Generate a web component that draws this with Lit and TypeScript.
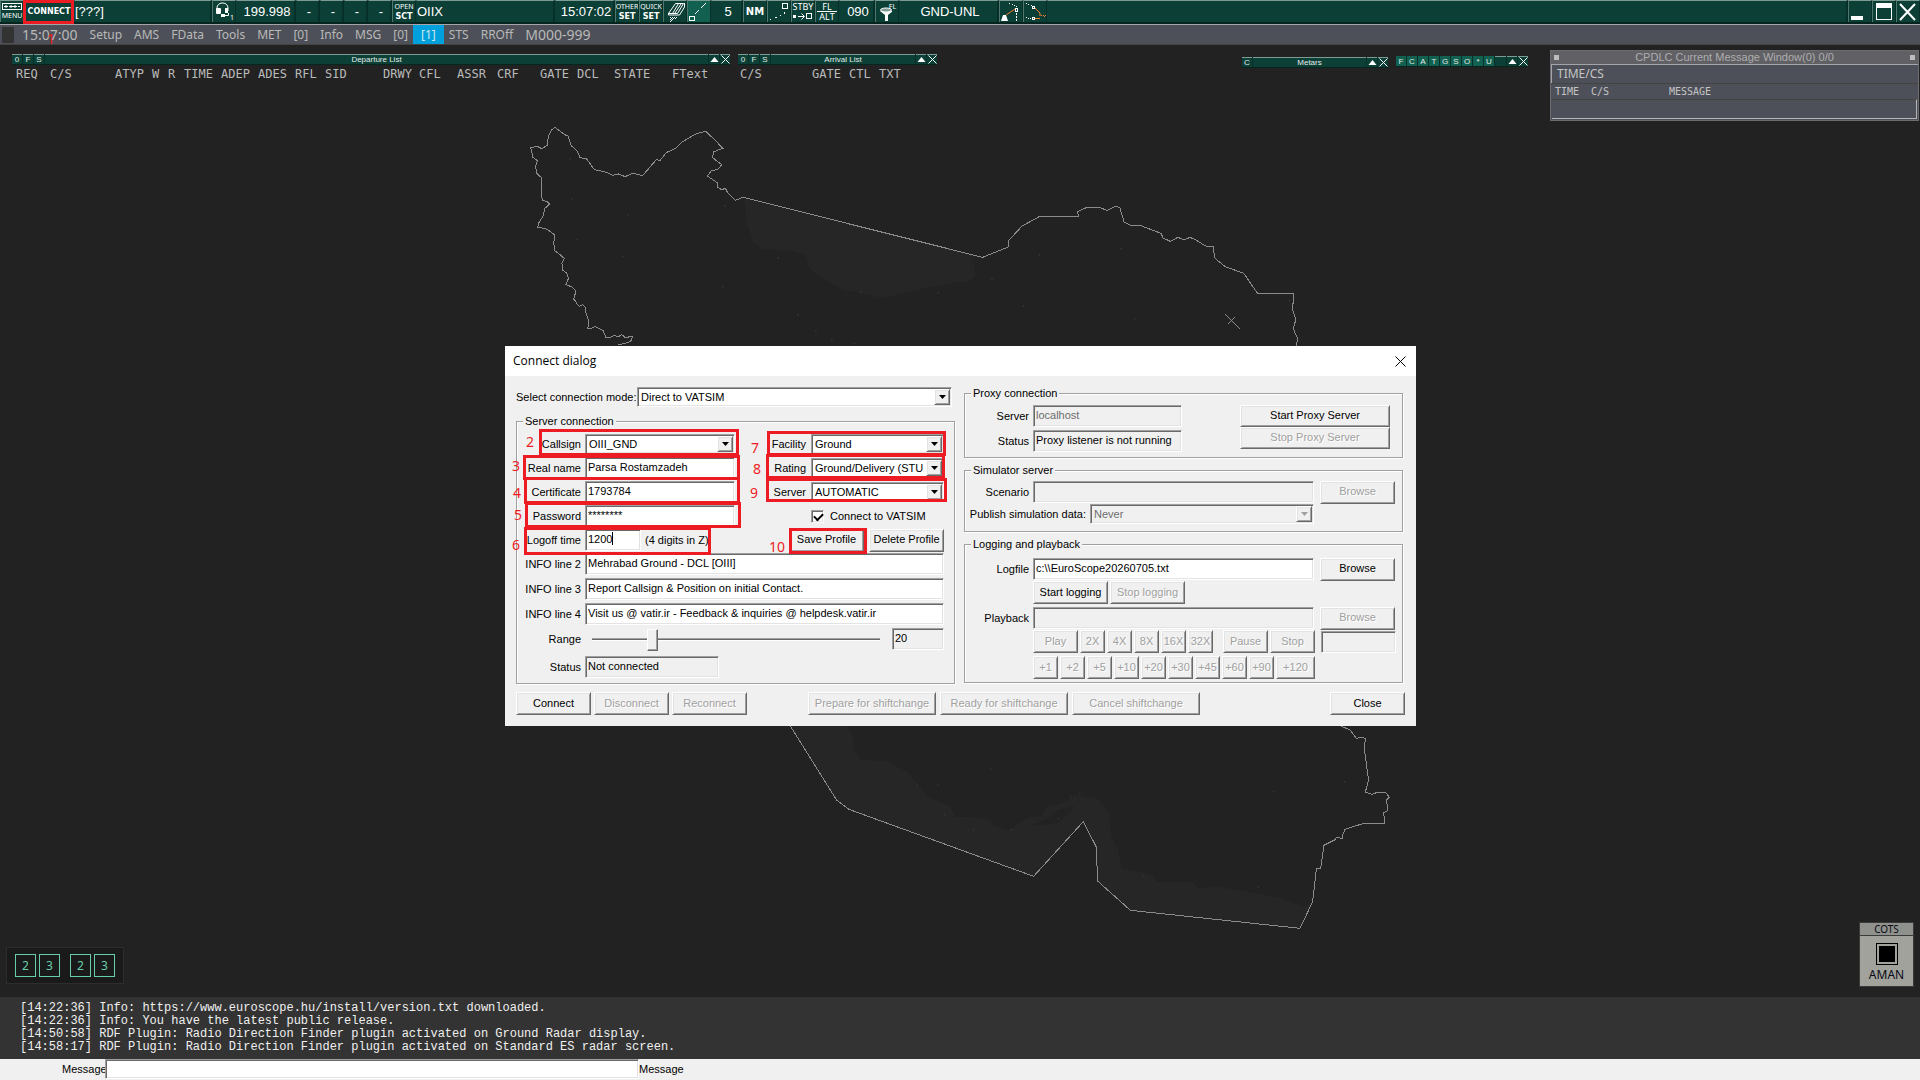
import { LitElement, html, svg, css, nothing } from "lit";
import { customElement } from "lit/decorators.js";
import { classMap } from "lit/directives/class-map.js";

/* ---------- toolbar icons, drawn on a 22 x 22 pixel grid ---------- */
const icon = (body: unknown, w = 22, h = 22) =>
  html`<svg class="icon" width=${w} height=${h} viewBox="0 0 ${w} ${h}" aria-hidden="true">${body}</svg>`;

const dots = (points: number[][], fill = "#fff") =>
  points.map(([x, y]) => svg`<rect x=${x} y=${y} width="1" height="1" fill=${fill}></rect>`);

const menuIcon = icon(svg`
  <rect x="1.5" y=".5" width="19" height="6" fill="none" stroke="#fff"></rect>
  <path d="M3 3.500h4M5 2v3M8 3.500h4M10 2v3M12 3.500h4M17 3.500h2M14 2v3" stroke="#fff"></path>`, 22, 8);

const headsetIcon = icon(svg`
  <path d="M3 10V7a5 5 0 0 1 5-5h1a5 5 0 0 1 5 5v3" fill="none" stroke="#fff"></path>
  <rect x="2" y="7" width="5" height="6" rx="1" fill="#fff"></rect>
  <rect x="11" y="7" width="3" height="5" fill="#fff"></rect>
  <path d="M14.500 12v2.500H11" fill="none" stroke="#fff"></path><rect x="7" y="13" width="4" height="3" fill="#fff"></rect>`, 16, 22);

const stripIcon = icon(svg`
  <path d="M11.500 2.500h8l-6 10h-9z M14.500 2.500l-6 10 M17 3l-6 9" fill="none" stroke="#fff"></path>
  <path d="M20.500 2v4l-5 8h-11v-2" fill="none" stroke="#fff"></path>
  ${dots([[6, 16], [8, 16], [10, 16], [12, 16], [7, 17], [9, 17], [11, 17], [6, 18], [8, 18], [7, 19], [6, 20]])}`);

const vectorIcon = icon(svg`
  <rect x="1.500" y="15.500" width="5" height="4" fill="none" stroke="#fff"></rect>
  <path d="M7 13l4-4M13 7l5-5" stroke="#fff"></path>`);

const trailIcon = icon(svg`
  <rect x="14.500" y="2.500" width="5" height="5" fill="none" stroke="#fff"></rect>
  ${dots([[16, 11], [16, 12], [12, 14], [8, 16], [7, 16], [2, 18]])}`);

const standbyIcon = icon(svg`
  <rect x="1" y="4" width="3" height="3" fill="#fff"></rect>
  <path d="M6 5.500h6M9.500 2.500l3 3-3 3" fill="none" stroke="#fff"></path>
  <rect x="14.500" y="2.500" width="5" height="5" fill="none" stroke="#fff"></rect>`, 22, 10);

const funnelIcon = icon(svg`
  <path d="M2 10l5 4v6h3v-6l5-4z" fill="#fff"></path>
  <ellipse cx="8" cy="9" rx="5.500" ry="2" fill="#7e9b93" stroke="#fff"></ellipse>`, 14, 22);

const trackIcon = icon(svg`
  <path d="M3 14h3l2 6H1z" fill="#fff"></path>
  <path d="M6 14l9-6" stroke="#f47b30"></path>
  <rect x="15.500" y="7.500" width="2" height="3" fill="none" stroke="#fff"></rect>
  <path d="M16.500 12v2M16.500 15v2M16.500 18v2" stroke="#fff"></path>
  ${dots([[9, 2], [12, 3], [14, 4], [16, 5]])}`);

const arcIcon = icon(svg`
  <path d="M11 7l5 5v3M11 17.500h5" fill="none" stroke="#f47b30"></path>
  ${dots([[17, 14], [19, 14], [20, 15], [21, 14]], "#f47b30")}
  <rect x="8.500" y="5.500" width="2" height="2" fill="none" stroke="#fff"></rect>
  <rect x="8.500" y="16.500" width="2" height="2" fill="none" stroke="#fff"></rect>
  ${dots([[2, 2], [4, 3], [7, 4], [2, 16], [4, 17], [6, 17]])}`);

const minimizeIcon = icon(svg`<rect x="2" y="15" width="12" height="4" fill="#fff"></rect>`);
const maximizeIcon = icon(svg`<rect x="3.500" y="3.500" width="15" height="15" fill="none" stroke="#fff"></rect><rect x="3" y="2" width="16" height="5" fill="#fff"></rect>`);
const closeIcon = icon(svg`<path d="M3 3l15 16M18 3L3 19" stroke="#fff" stroke-width="2"></path>`);

const upGlyph = html`<svg width="9" height="7" viewBox="0 0 9 7" aria-hidden="true"><path d="M4.500 1L8.500 6h-8z" fill="#fff"></path></svg>`;
const crossGlyph = html`<svg width="9" height="9" viewBox="0 0 9 9" aria-hidden="true"><path d="M.5.5l8 8M8.500.5l-8 8" stroke="#fff"></path></svg>`;

/* ---------- sector map ---------- */
const northBorder =
  "216,735 238,725 242,710 228,712 222,704 216,710 208,706 202,712 193,712 188,692 180,685 173,680 168,684 160,686 162,665 157,640 155,620 150,614 145,619 140,612 138,602 134,598 137,582 137,570 130,560 120,554 125,535 122,520 114,510 113,490 117,475 108,462 100,452 98,430 100,405 86,388 76,384 69,382 70,370 78,350 82,325 90,312 86,304 77,302 75,260 75,232 67,220 65,200 68,182 60,172 56,143 68,139 76,146 86,136 88,110 94,90 100,82 108,92 118,104 124,108 130,137 140,152 146,173 158,177 172,209 192,216 206,226 216,222 228,230 242,220 260,227 285,179 292,181 303,158 320,145 332,126 358,101 375,94 392,120 406,145 390,155 387,172 404,194 398,207 385,213 378,228 396,248 397,262 404,269 411,265 415,278 429,301 443,292 880,472 928,440 927,422 952,378 983,350 1055,350 1053,335 1070,322 1092,322 1107,331 1122,319 1130,323 1138,367 1150,376 1168,377 1205,400 1209,414 1222,424 1236,412 1247,420 1258,412 1270,421 1286,438 1300,440 1303,474 1322,500 1356,520 1381,580 1447,580 1445,630 1451,660 1446,685 1454,715 1452,740";
const northSea =
  "445,296 450,370 462,430 480,447 536,455 556,465 564,505 600,547 625,570 660,580 695,595 760,570 800,557 830,547 855,545 867,530 866,505 860,470 880,472";
const southBorder =
  "72,18 182,240 211,268 650,469 768,305 799,381 802,483 880,571 1283,625 1313,545 1322,445 1332,445 1340,376 1365,360 1370,352 1384,356 1384,345 1390,328 1432,311 1484,310 1482,278 1491,272 1489,240 1495,232 1488,219 1468,216 1455,223 1438,217 1446,180 1436,90 1438,55 1430,52 1417,55 1402,30 1380,18";
const southSea =
  "72,18 208,18 222,50 222,85 240,120 300,122 350,155 372,190 400,230 450,258 465,290 510,292 545,300 555,318 590,330 640,290 670,290 680,262 720,248 750,225 800,235 830,280 835,350 850,385 860,445 930,462 945,485 1030,485 1040,503 1090,500 1160,515 1240,535 1290,560 1313,545 1283,625 880,571 802,483 799,381 768,305 650,469 211,268 182,240";
const northDots = [[127, 175], [130, 295], [232, 343], [138, 418], [223, 469], [365, 109], [409, 316], [506, 472], [405, 559], [542, 643], [575, 691], [604, 718], [645, 730], [657, 577], [798, 577], [896, 535], [953, 616], [982, 463], [1131, 445], [1156, 655], [1438, 601]];
const southDots = [[547, 145], [374, 191], [422, 193], [438, 283], [506, 328], [595, 328], [738, 229], [759, 220], [709, 294], [616, 433], [564, 425], [911, 469], [1183, 500], [1219, 214], [1388, 184]];

const sectorMap = html`
  <svg class="map" viewBox="0 45 1920 952" preserveAspectRatio="xMidYMid slice" role="img" aria-label="Sector map">
    <g transform="translate(500 100) scale(.5485 .3333)">
      <polygon class="sea" points=${northSea}></polygon>
      <polyline class="border" points=${northBorder}></polyline>
      <path class="border" d="M1322 642L1348 686M1340 652L1327 672"></path>
      ${northDots.map(([x, y]) => svg`<rect class="spot" x=${x} y=${y} width="2" height="3"></rect>`)}
    </g>
    <g transform="translate(760 720) scale(.4209 .3333)">
      <polygon class="sea" points=${southSea}></polygon>
      <path class="land" d="M643 318l45-26 18-22 42-12-14 24-26 26-40 8z"></path>
      <polyline class="border" points=${southBorder}></polyline>
      ${southDots.map(([x, y]) => svg`<rect class="spot" x=${x} y=${y} width="2" height="3"></rect>`)}
    </g>
  </svg>`;

/* ---------- data ---------- */
const departureColumns: [string, number][] = [
  ["REQ", 34], ["C/S", 65], ["ATYP", 37], ["W", 16], ["R", 16], ["TIME", 37], ["ADEP", 37], ["ADES", 37],
  ["RFL", 30], ["SID", 58], ["DRWY", 36], ["CFL", 38], ["ASSR", 40], ["CRF", 43], ["GATE", 37], ["DCL", 37],
  ["STATE", 58], ["FText", 50],
];
const arrivalColumns: [string, number][] = [["C/S", 72], ["GATE", 37], ["CTL", 30], ["TXT", 40]];

const logLines = [
  "[14:22:36] Info: https://www.euroscope.hu/install/version.txt downloaded.",
  "[14:22:36] Info: You have the latest public release.",
  "[14:50:58] RDF Plugin: Radio Direction Finder plugin activated on Ground Radar display.",
  "[14:58:17] RDF Plugin: Radio Direction Finder plugin activated on Standard ES radar screen.",
];

/* Step markers, in dialog coordinates: box [x, y, w, h] and number [x, y]. */
const steps = [
  { n: 2, box: [34, 83, 200, 27], at: [21, 87] },
  { n: 3, box: [18, 109, 217, 25], at: [7, 111] },
  { n: 4, box: [19, 131, 216, 27], at: [8, 138] },
  { n: 5, box: [20, 156, 216, 26], at: [9, 160] },
  { n: 6, box: [19, 181, 187, 28], at: [7, 190] },
  { n: 7, box: [262, 85, 179, 25], at: [246, 93] },
  { n: 8, box: [261, 108, 179, 25], at: [248, 114] },
  { n: 9, box: [261, 132, 181, 24], at: [245, 138] },
  { n: 10, box: [284, 182, 78, 26], at: [264, 192] },
];

@customElement("app-root")
export class AppRoot extends LitElement {
  static styles = css`
    :host {
      display: flex; flex-direction: column; min-height: 100vh; overflow: hidden;
      background: #222; color: #fff; font: 11px/13px "Liberation Sans", sans-serif;
    }
    * { box-sizing: border-box; }
    button, input, select { font: inherit; color: inherit; margin: 0; border-radius: 0; outline: none; }
    svg { display: block; flex: none; }

    /* toolbar */
    .toolbar { display: flex; height: 24px; background: #0c4037; border-bottom: 2px solid #07251f; }
    .cell {
      display: flex; align-items: center; justify-content: center; flex: none; width: 24px; height: 22px; padding: 0;
      border: 0; border-top: 1px solid #7e9b93; border-left: 1px solid #4f776d; border-right: 1px solid #08302a;
      background: #0c4037; color: #fff; white-space: nowrap; overflow: hidden;
    }
    .cell.stack { flex-direction: column; }
    .cell.lit { background: #12604f; }
    .cell.field { padding-left: 3px; border-left-color: #0c4037; border-right: 2px solid #08302a; font-size: 13px; line-height: 20px; }
    .cell.left { justify-content: flex-start; padding-left: 0; }
    .cell.grow { flex: 1; }
    .w50 { width: 50px; } .w138 { width: 138px; } .w60 { width: 60px; } .w32 { width: 32px; }
    .w36 { width: 36px; } .w100 { width: 100px; } .w139 { width: 139px; }
    .tiny { font: 7px/9px "Noto Sans", sans-serif; }
    .small { font: 9px/9px "Noto Sans", sans-serif; }
    .tag { font: bold 8px/11px "DejaVu Sans", sans-serif; }
    .unit { font: bold 10px/12px "DejaVu Sans", sans-serif; }
    .rule { border-bottom: 1px solid #fff; padding: 0 5px; }
    .low { align-self: flex-end; }
    .high { align-self: flex-start; margin: 1px 0 0 -3px; }

    /* menu bar */
    .menubar {
      display: flex; align-items: center; gap: 12px; height: 21px; padding-left: 2px; background: #4d5058;
      border-top: 1px solid #a3a5a8; border-bottom: 1px solid #43443f; color: #b9b9b9;
      font: 12px/19px "Noto Sans", sans-serif;
    }
    .menubar a { color: inherit; text-decoration: none; }
    .menubar .grip { width: 12px; height: 16px; background: #333; margin-right: -4px; }
    .menubar .wide { font-size: 14px; }
    .menubar .on { background: #00a0dc; color: #d8e8ee; padding: 0 8px; margin: 0 -7px; }

    /* radar area and its floating lists */
    .radar { position: relative; flex: 1; min-height: 900px; }
    .map { position: absolute; inset: 0; width: 100%; height: 100%; }
    .border { fill: none; stroke: #8b8b8b; stroke-width: 1px; vector-effect: non-scaling-stroke; shape-rendering: crispEdges; }
    .sea { fill: #262626; }
    .land { fill: #222; }
    .spot { fill: #4c4c4c; }

    .list { position: absolute; top: 9px; color: #bababa; }
    .departures { left: 12px; width: 718px; }
    .arrivals { left: 738px; width: 199px; }
    .metars { left: 1242px; top: 12px; width: 146px; }
    .filters { left: 1396px; top: 11px; width: 132px; }
    .bar { display: flex; gap: 1px; height: 11px; background: #08302a; border-bottom: 1px solid #07251f; }
    .bar button, .bar .caption {
      display: flex; align-items: center; justify-content: center; flex: none; width: 10px; height: 10px; padding: 0;
      border: 0; border-top: 1px solid #7e9b93; background: #0c4037; color: #e4ebe8; font-size: 8px; line-height: 9px;
    }
    .bar .caption { flex: 1; }
    .bar .lit { background: #12604f; border-top-color: #12604f; }
    .list table { border-collapse: collapse; table-layout: fixed; width: 0; margin: 2px 0 0 2px; }
    .list th { padding: 0 0 0 2px; text-align: left; font: 12px/14px "DejaVu Sans Mono", monospace; white-space: nowrap; }
    .list .shallow { margin-left: 0; }

    .cpdlc {
      position: absolute; top: 5px; right: 1px; width: 369px; border: 1px solid #6a6c70; background: #4d5058; color: #c4c4c4;
    }
    .cpdlc header { display: flex; align-items: center; justify-content: space-between; height: 13px; padding: 0 3px; background: #606065; color: #aeaeae; }
    .cpdlc header i { width: 5px; height: 5px; background: #bdbdbd; }
    .cpdlc .mode { height: 19px; padding-left: 5px; border: 1px solid #a3a5a8; border-width: 1px 0 0 1px; font: 12px/18px "Noto Sans", sans-serif; }
    .cpdlc .columns { display: flex; height: 16px; padding-left: 4px; border-top: 1px solid #43443f; font: 10px/15px "DejaVu Sans Mono", monospace; }
    .cpdlc .columns span { width: 36px; }
    .cpdlc .columns span + span { width: 78px; }
    .cpdlc .entry { height: 20px; margin: 0 1px 1px; border: 1px solid #b4b5b7; border-width: 0 1px 1px 0; border-top: 1px solid #43443f; }

    .ports { position: absolute; left: 6px; bottom: 13px; display: flex; gap: 3px; padding: 6px 8px; background: #1a1a1a; border: 1px solid #2d2d2d; }
    .ports button { width: 21px; height: 23px; padding: 0; border: 1px solid #66cdaa; background: none; color: #66cdaa; font: 12px/20px "Noto Sans", sans-serif; }
    .ports .second { margin-left: 7px; }

    .cots {
      position: absolute; right: 6px; bottom: 10px; width: 55px; padding-bottom: 3px; border: 1px solid #3a3a3a; background: #a0a29b; color: #0a0a14;
      text-align: center; font: 12px/16px "Noto Sans", sans-serif;
    }
    .cots h2 { margin: 0; height: 13px; background: #8f918d; border-bottom: 1px solid #3a3a3a; font: 10px/12px "Noto Sans", sans-serif; }
    .cots button { display: block; width: 22px; height: 22px; margin: 7px auto 2px; padding: 2px; border: 1px solid #000; background: #000 content-box; }

    /* connect dialog */
    .dialog { position: absolute; left: 505px; top: 301px; width: 911px; background: #f0f0f0; color: #000; }
    .titlebar { display: flex; align-items: center; justify-content: space-between; height: 30px; padding: 0 10px 0 8px; background: #fff; font: 12px/16px "Open Sans", sans-serif; }
    .titlebar h1 { margin: 0; font: inherit; }
    .titlebar button { padding: 0; border: 0; background: none; }
    .panels { display: flex; gap: 9px; padding: 11px 13px 0 11px; }
    .panel { display: flex; flex-direction: column; flex: 1; min-width: 0; gap: 6px; }
    .panel.first { gap: 8px; }
    fieldset {
      margin: 0; padding: 5px 10px 0 0; min-width: 0; border: 1px solid #a0a0a0;
      box-shadow: 1px 1px #fff, inset 1px 1px #fff;
    }
    legend { margin-left: 6px; padding: 0 2px; background: #f0f0f0; }
    .line { display: flex; align-items: center; height: 22px; }
    .lines { display: flex; flex-direction: column; gap: 2px; }
    .lines.loose { gap: 3px; }
    .halves { display: flex; }
    .halves .lines:first-child { flex: none; width: 218px; }
    .halves .lines:last-child { flex: 1; min-width: 0; }
    .name { flex: none; width: 68px; padding-right: 4px; text-align: right; white-space: nowrap; }
    .halves .lines:last-child .name { width: 76px; padding-right: 5px; }
    .mode { display: flex; align-items: center; height: 20px; padding-right: 3px; }
    .mode label { flex: none; width: 121px; white-space: nowrap; }

    .sunk, .combo {
      flex: 1; min-width: 0; height: 22px; background: #fff; border: 1px solid; border-color: #a0a0a0 #fff #fff #a0a0a0;
      box-shadow: inset 1px 1px #696969, inset -1px -1px #e3e3e3;
    }
    .sunk { padding: 0 2px 3px; }
    .sunk.flat { background: #f0f0f0; }
    .sunk:disabled { background: #f0f0f0; color: #6d6d6d; }
    .combo { display: flex; height: 20px; padding: 1px; }
    .combo select { flex: 1; min-width: 0; appearance: none; border: 0; padding: 0 2px; background: #fff; color: #000; }
    .combo.off, .combo.off select { background: #f0f0f0; color: #6d6d6d; opacity: 1; }
    .drop { display: flex; align-items: center; justify-content: center; flex: none; width: 16px; background: #f0f0f0; pointer-events: none; }
    .drop, .push {
      border: 1px solid; border-color: #fff #696969 #696969 #fff;
      box-shadow: inset 1px 1px #e3e3e3, inset -1px -1px #a0a0a0;
    }
    .push { flex: none; width: 75px; height: 23px; padding: 0 0 1px; background: #f0f0f0; color: #000; white-space: nowrap; }
    .push:disabled { color: #a0a0a0; text-shadow: 1px 1px #fff; }
    .push.s { width: 25px; } .push.m { width: 45px; } .push.xm { width: 39px; }
    .push.l { width: 128px; } .push.xl { width: 150px; }
    .proxy .push { height: 22px; }
    .w55 { flex: none; width: 56px; } .w134 { flex: none; width: 134px; } .w52 { flex: none; width: 52px; }
    .w149 { flex: none; width: 149px; } .w281 { flex: none; width: 281px; } .w75 { flex: none; width: 75px; }
    .spacer { flex: none; width: 81px; }
    .hint { padding-left: 4px; white-space: nowrap; }
    .caret { background: linear-gradient(#000, #000) 26px 2px / 1px 13px no-repeat #fff; }
    .buttons { display: flex; gap: 2px; align-items: center; }
    .buttons.end { justify-content: flex-end; gap: 5px; }
    .check { padding-left: 6px; }
    .tick {
      appearance: none; flex: none; width: 13px; height: 13px; margin-left: 76px; background: #fff;
      border: 1px solid; border-color: #a0a0a0 #fff #fff #a0a0a0; box-shadow: inset 1px 1px #696969, inset -1px -1px #e3e3e3;
    }
    .tick::before { content: ""; display: block; width: 7px; height: 4px; margin: 2px 0 0 2px; border: solid #000; border-width: 0 0 2px 2px; rotate: -45deg; }
    .slider { appearance: none; width: 288px; height: 22px; margin: 0 12px 0 7px; background: none; }
    .slider::-webkit-slider-runnable-track { height: 3px; background: #696969; border-top: 1px solid #a0a0a0; border-bottom: 1px solid #fff; }
    .slider::-webkit-slider-thumb {
      appearance: none; width: 11px; height: 22px; margin-top: -10px; background: #f0f0f0;
      border: 1px solid; border-color: #fff #696969 #696969 #fff; box-shadow: inset -1px -1px #a0a0a0;
    }
    .server { padding-bottom: 5px; }
    .status { margin-top: 3px; }
    .proxy { display: flex; padding-bottom: 5px; }
    .proxy .block { display: flex; gap: 58px; align-items: flex-start; }
    .proxy .buttons { flex-direction: column; gap: 0; }
    .sim { padding: 4px 7px 6px 0; }
    .sim .publish { width: 125px; padding-right: 4px; text-align: right; flex: none; }
    .wide-line { gap: 0; }
    .wide-line .push { margin-left: 6px; }
    .play { padding: 7px 7px 0 0; }
    .play .line { margin-bottom: 1px; }
    .play .indent { padding-left: 68px; height: 23px; margin-bottom: 3px; }
    .play .pausegap { margin-left: 8px; }
    .play .readout { margin-left: 4px; }
    .footer { display: flex; gap: 3px; padding: 8px 11px 11px; }
    .footer .far { margin-left: 58px; }
    .footer .last { margin-left: auto; }
    .footer .next { margin-left: 1px; }

    .mark { position: absolute; border: 3px solid #ed1c24; pointer-events: none; }
    .digit { position: absolute; color: #ed1c24; font: 14px/18px "Noto Sans", sans-serif; pointer-events: none; }
    .mark.connect { left: 23px; top: 0; width: 51px; height: 24px; }
    .digit.one { left: 47px; top: 30px; }

    /* log and message line */
    .log { margin: 0; padding: 5px 20px; background: #333; color: #f0f0f0; font: 12px/13px "Liberation Mono", monospace; white-space: pre; }
    .log p { margin: 0; }
    .message { display: flex; align-items: center; height: 21px; padding: 0 0 1px 62px; background: #f0f0f0; color: #000; }
    .message .sunk { flex: none; width: 534px; height: 20px; }
    .message label { width: 43px; }
  `;

  private combo(id: string, value: string, disabled = false) {
    return html`<span class=${classMap({ combo: true, off: disabled })}>
      <select id=${id} ?disabled=${disabled}><option>${value}</option></select>
      <span class="drop"><svg width="7" height="4" viewBox="0 0 7 4" aria-hidden="true"><path d="M0 0h7L3.500 4z" fill=${disabled ? "#a0a0a0" : "#000"}></path></svg></span>
    </span>`;
  }

  private push(text: string, disabled = false, size = "") {
    return html`<button class="push ${size}" ?disabled=${disabled}>${text}</button>`;
  }

  private listBar(title: string, keys: string[]) {
    return html`<div class="bar">
      ${keys.map((k) => html`<button>${k}</button>`)}
      <span class="caption">${title}</span>
      <button aria-label="Collapse">${upGlyph}</button><button aria-label="Close">${crossGlyph}</button>
    </div>`;
  }

  private columns(cols: [string, number][], cls = "") {
    return html`<table class=${cls || nothing}>
      <colgroup>${cols.map(([, w]) => html`<col style="width:${w}px" />`)}</colgroup>
      <thead><tr>${cols.map(([t]) => html`<th scope="col">${t}</th>`)}</tr></thead>
    </table>`;
  }

  private toolbar() {
    return html`<nav class="toolbar" aria-label="Toolbar">
      <button class="cell stack">${menuIcon}<span class="tiny">MENU</span></button>
      <button class="cell w50 tag">CONNECT</button>
      <span class="cell field left w138">[???]</span>
      <button class="cell">${headsetIcon}<span class="tiny low">1</span></button>
      <span class="cell field w60">199.998</span>
      ${[0, 1, 2, 3].map(() => html`<span class="cell field">-</span>`)}
      <button class="cell stack"><span class="tiny">OPEN</span><span class="tag">SCT</span></button>
      <span class="cell field left w139">OIIX</span>
      <span class="cell field w60">15:07:02</span>
      <button class="cell stack"><span class="tiny">OTHER</span><span class="tag">SET</span></button>
      <button class="cell stack"><span class="tiny">QUICK</span><span class="tag">SET</span></button>
      <button class="cell" aria-label="Strips">${stripIcon}</button>
      <button class="cell lit" aria-label="Vector">${vectorIcon}</button>
      <span class="cell field w32">5</span>
      <button class="cell unit">NM</button>
      <button class="cell" aria-label="Trail">${trailIcon}</button>
      <button class="cell stack"><span class="small">STBY</span>${standbyIcon}</button>
      <button class="cell stack small"><span class="rule">FL</span><span>ALT</span></button>
      <span class="cell field w36">090</span>
      <button class="cell">${funnelIcon}<span class="tiny high">FL</span></button>
      <span class="cell field w100">GND-UNL</span>
      <button class="cell" aria-label="Track">${trackIcon}</button>
      <button class="cell" aria-label="Arc">${arcIcon}</button>
      <span class="cell field grow"></span>
      <button class="cell" aria-label="Minimize">${minimizeIcon}</button>
      <button class="cell" aria-label="Maximize">${maximizeIcon}</button>
      <button class="cell" aria-label="Close">${closeIcon}</button>
    </nav>`;
  }

  private menubar() {
    const items = ["Setup", "AMS", "FData", "Tools", "MET", "[0]", "Info", "MSG", "[0]"];
    return html`<nav class="menubar" aria-label="Menu">
      <span class="grip"></span>
      <span class="wide">15:07:00</span>
      ${items.map((t) => html`<a href="#">${t}</a>`)}
      <a href="#" class="on">[1]</a>
      <a href="#">STS</a><a href="#">RROff</a><a href="#" class="wide">M000-999</a>
    </nav>`;
  }

  private serverPanel() {
    return html`<div class="panel first">
      <div class="mode">
        <label for="mode">Select connection mode:</label>
        ${this.combo("mode", "Direct to VATSIM")}
      </div>
      <fieldset class="server">
        <legend>Server connection</legend>
        <div class="lines">
          <div class="halves">
            <div class="lines">
              <div class="line"><label class="name" for="callsign">Callsign</label>${this.combo("callsign", "OIII_GND")}</div>
              <div class="line"><label class="name" for="realname">Real name</label><input class="sunk" id="realname" value="Parsa Rostamzadeh" /></div>
              <div class="line"><label class="name" for="cert">Certificate</label><input class="sunk" id="cert" value="1793784" /></div>
              <div class="line"><label class="name" for="pass">Password</label><input class="sunk" id="pass" autocomplete="off" value="********" /></div>
              <div class="line"><label class="name" for="logoff">Logoff time</label><input class="sunk w55 caret" id="logoff" value="1200" /><span class="hint">(4 digits in Z)</span></div>
            </div>
            <div class="lines">
              <div class="line"><label class="name" for="facility">Facility</label>${this.combo("facility", "Ground")}</div>
              <div class="line"><label class="name" for="rating">Rating</label>${this.combo("rating", "Ground/Delivery (STU1)")}</div>
              <div class="line"><label class="name" for="srv">Server</label>${this.combo("srv", "AUTOMATIC")}</div>
              <div class="line"><input type="checkbox" class="tick" id="vatsim" checked /><label class="check" for="vatsim">Connect to VATSIM</label></div>
              <div class="line buttons end">${this.push("Save Profile")}${this.push("Delete Profile")}</div>
            </div>
          </div>
          <div class="lines loose">
            <div class="line"><label class="name" for="info2">INFO line 2</label><input class="sunk" id="info2" value="Mehrabad Ground - DCL [OIII]" /></div>
            <div class="line"><label class="name" for="info3">INFO line 3</label><input class="sunk" id="info3" value="Report Callsign &amp; Position on initial Contact." /></div>
            <div class="line"><label class="name" for="info4">INFO line 4</label><input class="sunk" id="info4" value="Visit us @ vatir.ir - Feedback &amp; inquiries @ helpdesk.vatir.ir" /></div>
            <div class="line"><label class="name" for="range">Range</label><input type="range" class="slider" id="range" min="0" max="100" value="20" /><input class="sunk flat w52" aria-label="Range value" readonly value="20" /></div>
            <div class="line status"><label class="name" for="status">Status</label><input class="sunk flat w134" id="status" readonly value="Not connected" /></div>
          </div>
        </div>
      </fieldset>
    </div>`;
  }

  private rightPanel() {
    return html`<div class="panel">
      <fieldset>
        <legend>Proxy connection</legend>
        <div class="proxy"><div class="block">
          <div class="lines loose">
            <div class="line"><label class="name" for="pserver">Server</label><input class="sunk w149" id="pserver" disabled value="localhost" /></div>
            <div class="line"><label class="name" for="pstatus">Status</label><input class="sunk flat w149" id="pstatus" readonly value="Proxy listener is not running" /></div>
          </div>
          <div class="buttons">${this.push("Start Proxy Server", false, "xl")}${this.push("Stop Proxy Server", true, "xl")}</div>
        </div></div>
      </fieldset>
      <fieldset class="sim">
        <legend>Simulator server</legend>
        <div class="line wide-line"><label class="name" for="scenario">Scenario</label><input class="sunk w281" id="scenario" disabled />${this.push("Browse", true)}</div>
        <div class="line"><label class="publish" for="publish">Publish simulation data:</label>${this.combo("publish", "Never", true)}<span class="spacer"></span></div>
      </fieldset>
      <fieldset class="play">
        <legend>Logging and playback</legend>
        <div class="line wide-line"><label class="name" for="logfile">Logfile</label><input class="sunk w281" id="logfile" value="c:\\\\EuroScope20260705.txt" />${this.push("Browse")}</div>
        <div class="buttons indent">${this.push("Start logging")}${this.push("Stop logging", true)}</div>
        <div class="line wide-line"><label class="name" for="playback">Playback</label><input class="sunk w281" id="playback" disabled />${this.push("Browse", true)}</div>
        <div class="buttons indent">
          ${this.push("Play", true, "m")}
          ${["2X", "4X", "8X", "16X", "32X"].map((t) => this.push(t, true, "s"))}
          ${this.push("Pause", true, "m pausegap")}${this.push("Stop", true, "m")}
          <input class="sunk w75 readout" aria-label="Playback time" disabled />
        </div>
        <div class="buttons indent">
          ${["+1", "+2", "+5", "+10", "+20", "+30", "+45", "+60", "+90"].map((t) => this.push(t, true, "s"))}
          ${this.push("+120", true, "xm")}
        </div>
      </fieldset>
    </div>`;
  }

  private dialog() {
    return html`<section class="dialog" role="dialog" aria-labelledby="dialog-title">
      <header class="titlebar">
        <h1 id="dialog-title">Connect dialog</h1>
        <button aria-label="Close dialog"><svg width="11" height="11" viewBox="0 0 11 11"><path d="M.5.5l10 10M10.500.5l-10 10" stroke="#000"></path></svg></button>
      </header>
      <div class="panels">${this.serverPanel()}${this.rightPanel()}</div>
      <footer class="footer">
        ${this.push("Connect")}${this.push("Disconnect", true)}${this.push("Reconnect", true)}
        ${this.push("Prepare for shiftchange", true, "l far")}${this.push("Ready for shiftchange", true, "l next")}${this.push("Cancel shiftchange", true, "l next")}
        ${this.push("Close", false, "last")}
      </footer>
      ${steps.map(({ n, box: [x, y, w, h], at: [dx, dy] }) => html`
        <span class="mark" style="left:${x}px;top:${y}px;width:${w}px;height:${h}px"></span>
        <span class="digit" style="left:${dx}px;top:${dy}px">${n}</span>`)}
    </section>`;
  }

  render() {
    return html`
      ${this.toolbar()}${this.menubar()}
      <span class="mark connect"></span><span class="digit one">1</span>
      <main class="radar">
        ${sectorMap}
        <section class="list departures">${this.listBar("Departure List", ["0", "F", "S"])}${this.columns(departureColumns)}</section>
        <section class="list arrivals">${this.listBar("Arrival List", ["0", "F", "S"])}${this.columns(arrivalColumns, "shallow")}</section>
        <section class="list metars">${this.listBar("Metars", ["C"])}</section>
        <section class="list filters"><div class="bar">
          ${["F", "C", "A", "T", "G", "S", "O", "*", "U"].map((k) => html`<button class="lit">${k}</button>`)}
          <span class="caption"></span><button aria-label="Collapse">${upGlyph}</button><button aria-label="Close">${crossGlyph}</button>
        </div></section>
        <section class="cpdlc">
          <header><i></i><span>CPDLC Current Message Window(0) 0/0</span><i></i></header>
          <div class="mode">TIME/CS</div>
          <div class="columns"><span>TIME</span><span>C/S</span><span>MESSAGE</span></div>
          <div class="entry"></div>
        </section>
        ${this.dialog()}
        <div class="ports"><button>2</button><button>3</button><button class="second">2</button><button>3</button></div>
        <section class="cots"><h2>COTS</h2><button aria-label="AMAN"></button>AMAN</section>
      </main>
      <div class="log">${logLines.map((l) => html`<p>${l}</p>`)}</div>
      <div class="message"><label for="msg">Message</label><input class="sunk" id="msg" /><output>Message</output></div>
    `;
  }
}
